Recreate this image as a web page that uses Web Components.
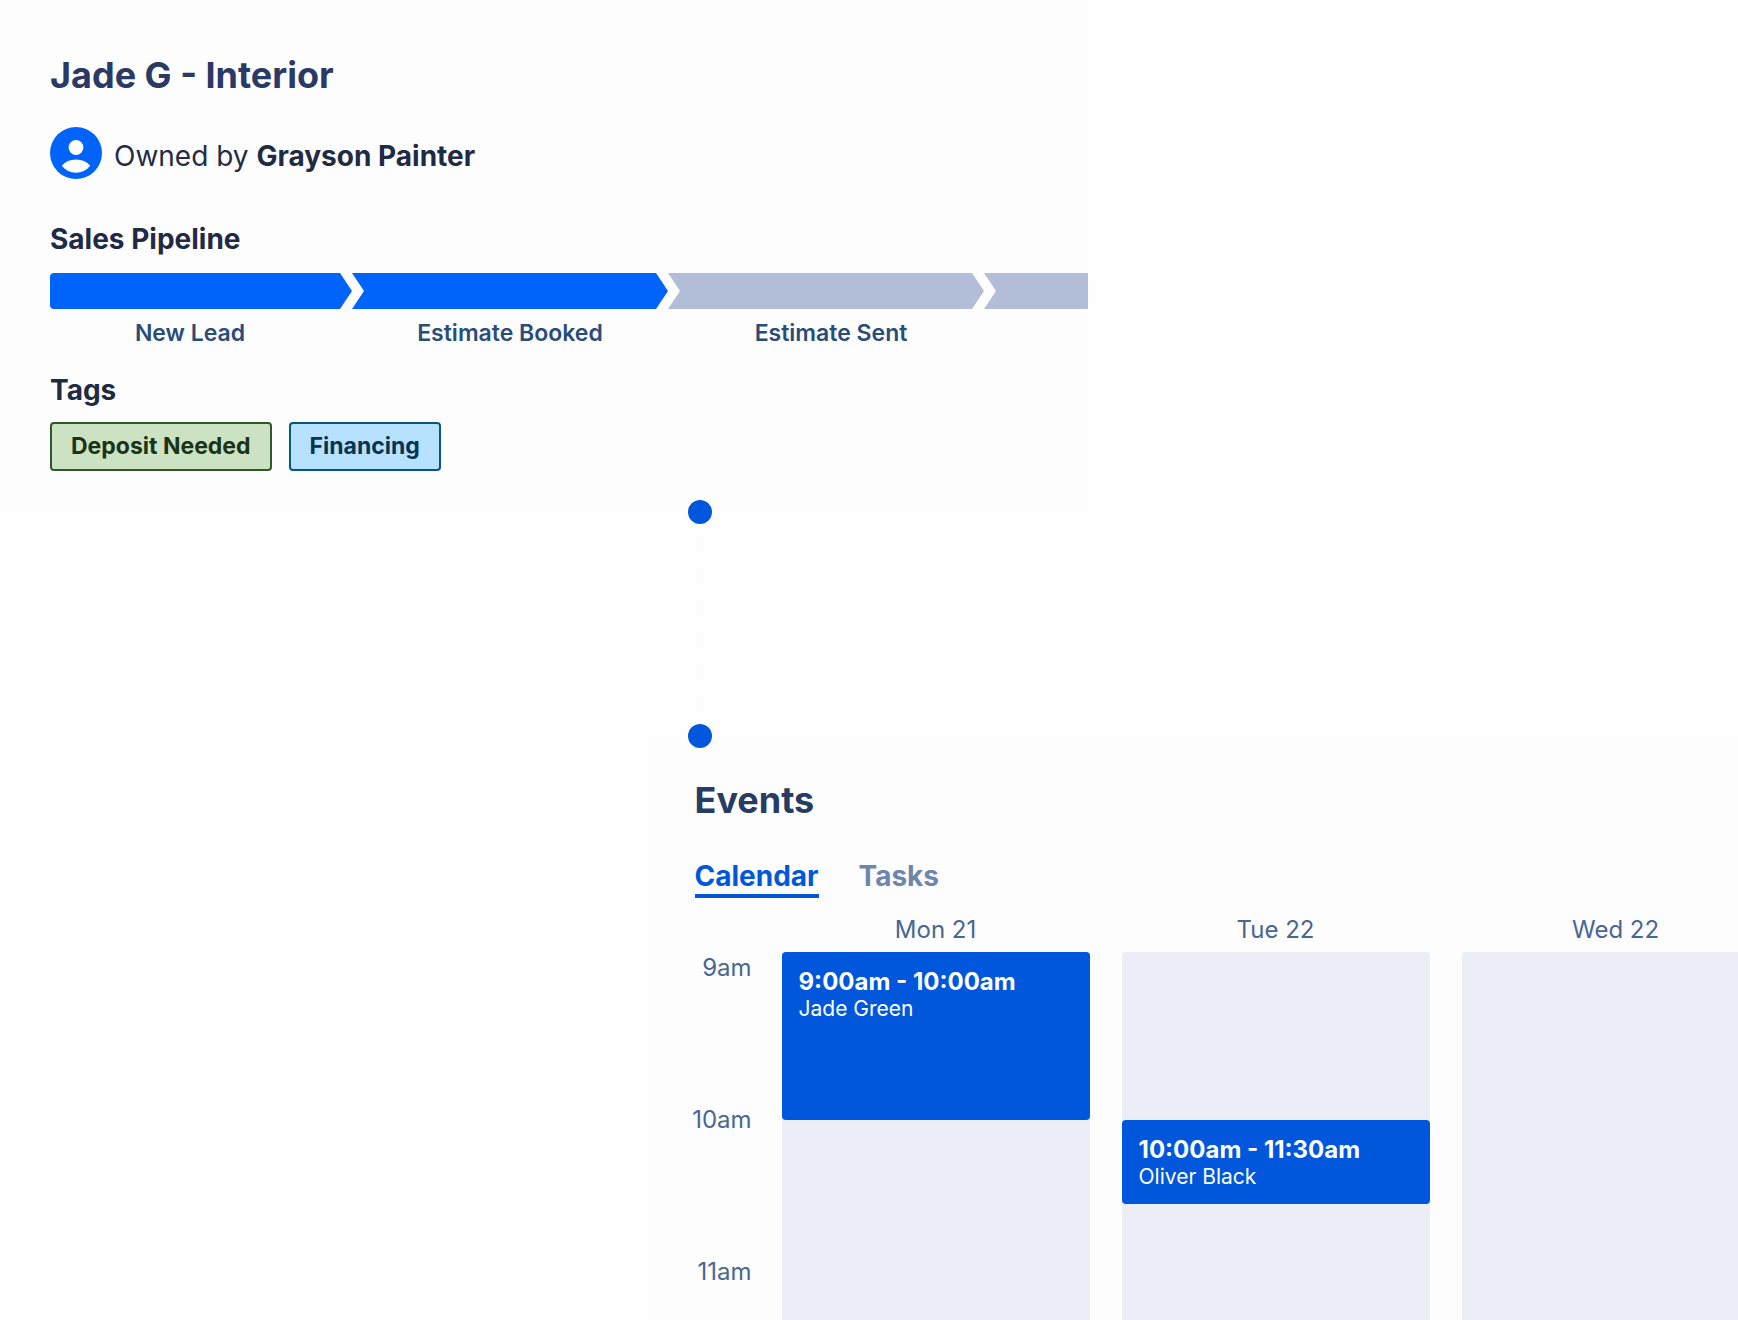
<!DOCTYPE html>
<html lang="en">
<head>
<meta charset="utf-8">
<meta name="viewport" content="width=device-width, initial-scale=1">
<title>Jade G - Interior</title>
<style>
  body { margin: 0; background: #fefefe; font-family: Inter, "Liberation Sans", sans-serif; }
</style>
</head>
<body>
<crm-page>
  <deal-card slot="deal" name="Jade G - Interior" owner="Grayson Painter">
    <pipeline-bar>
      <pipeline-stage first done>New Lead</pipeline-stage>
      <pipeline-stage done>Estimate Booked</pipeline-stage>
      <pipeline-stage>Estimate Sent</pipeline-stage>
      <pipeline-stage></pipeline-stage>
    </pipeline-bar>
    <tag-chip slot="tags" tone="green">Deposit Needed</tag-chip>
    <tag-chip slot="tags" tone="blue">Financing</tag-chip>
  </deal-card>
  <card-link slot="link"></card-link>
  <events-card slot="events">
    <hour-scale slot="hours" hours="9am,10am,11am"></hour-scale>
    <day-column day="Mon 21">
      <event-block time="9:00am - 10:00am" style="--height:168px">Jade Green</event-block>
    </day-column>
    <day-column day="Tue 22">
      <event-block time="10:00am - 11:30am" style="--start:168px;--height:84px">Oliver Black</event-block>
    </day-column>
    <day-column day="Wed 22"></day-column>
  </events-card>
</crm-page>

<script>
const define = (name, render, after) => customElements.define(name, class extends HTMLElement {
  connectedCallback() {
    if (this.shadowRoot) return;
    this.attachShadow({ mode: 'open' }).innerHTML =
      '<style>:host,*{box-sizing:border-box}:host([hidden]){display:none}</style>' + render(this);
    if (after) after(this);
  }
});

define('crm-page', () => `
  <style>
    :host { display: flex; flex-direction: column; height: 100vh; overflow: hidden; }
    .link { display: flex; margin: -12px 0; padding-left: calc(37.2% + 41px); z-index: 1; }
    .events { flex: 1; min-height: 0; display: flex; padding-left: 37.2%; }
    .deal { display: flex; width: 62.6%; }
    ::slotted(deal-card), ::slotted(events-card) { flex: 1; min-width: 0; }
  </style>
  <div class="deal"><slot name="deal"></slot></div>
  <div class="link"><slot name="link"></slot></div>
  <div class="events"><slot name="events"></slot></div>`);

define('deal-card', el => `
  <style>
    :host { display: block; background: #fdfdfd; padding: 51px 0 41px 50px; overflow: hidden; }
    h1 { margin: 0; font-size: 36px; line-height: 48px; font-weight: 700; color: #2b3a64; }
    .owner { display: flex; align-items: center; gap: 12px; margin-top: 28px; font-size: 28px; line-height: 34px; color: #242c45; }
    .owner p { margin: 6px 0 0; }
    b { font-weight: 700; color: #1f2a44; }
    svg { display: block; width: 52px; height: 52px; }
    h2 { margin: 0; font-size: 28px; line-height: 34px; font-weight: 700; color: #1f2a44; }
    .pipe { margin-top: 43px; }
    .tagh { margin-top: 26px; }
    .tags { display: flex; gap: 17px; margin-top: 15px; }
  </style>
  <h1>${el.getAttribute('name')}</h1>
  <div class="owner">
    <svg viewBox="0 0 52 52" aria-hidden="true"><circle cx="26" cy="26" r="26" fill="#0064fb"/><circle cx="26" cy="20.5" r="7.4" fill="#fff"/><path d="M11.8 38.8Q17 32.6 26 32.6T40.2 38.8Q34.500 45.800 26 45.800T11.800 38.800Z" fill="#fff"/></svg>
    <p>Owned by <b>${el.getAttribute('owner')}</b></p>
  </div>
  <h2 class="pipe">Sales Pipeline</h2>
  <slot></slot>
  <h2 class="tagh">Tags</h2>
  <div class="tags"><slot name="tags"></slot></div>`);

define('pipeline-bar', () => `
  <style>
    :host { display: flex; margin-top: 17px; overflow: hidden; }
  </style>
  <slot></slot>`);

define('pipeline-stage', () => `
  <style>
    :host { display: block; flex: 0 0 316px; --fill: #b2bed8; }
    :host([first]) { flex-basis: 302px; }
    :host([done]) { --fill: #0064fb; }
    .arrow { height: 36px; background: var(--fill);
      clip-path: polygon(0 0, calc(100% - 12px) 0, 100% 50%, calc(100% - 12px) 100%, 0 100%, 12px 50%); }
    :host([first]) .arrow { border-radius: 4px 0 0 4px;
      clip-path: polygon(0 0, calc(100% - 12px) 0, 100% 50%, calc(100% - 12px) 100%, 0 100%); }
    .label { height: 28px; margin-top: 10px; font-size: 23px; line-height: 28px; font-weight: 600; color: #2a4d78; text-align: center; }
    :host([first]) .label { padding-right: 22px; }
    :host(:not([done])) .label { padding-left: 10px; }
  </style>
  <div class="arrow"></div>
  <div class="label"><slot></slot></div>`);

define('tag-chip', () => `
  <style>
    :host { display: block; padding: 0 19px; border: 2px solid; border-radius: 4px; font-size: 23px; line-height: 45px; font-weight: 700; }
    :host([tone=green]) { background: #cbe3c3; border-color: #2f5a28; }
    :host([tone=blue]) { background: #b6e2ff; border-color: #04587f; }
    :host([tone=green]) span { color: #1b3316; }
    :host([tone=blue]) span { color: #083452; }
  </style>
  <span><slot></slot></span>`);

define('card-link', () => `
  <style>
    :host { display: flex; flex-direction: column; align-items: center; width: 24px; height: 248px; }
    i { width: 24px; height: 24px; border-radius: 50%; background: #0057dc; }
    .dash { flex: 1; width: 8px; margin: 12px 0; background: repeating-linear-gradient(#fcfbfd 0 16px, transparent 16px 32px); }
  </style>
  <i></i><div class="dash"></div><i></i>`);

define('events-card', () => `
  <style>
    :host { display: flex; flex-direction: column; background: #fdfdfd; padding: 40px 0 0 48px; overflow: hidden; }
    h1 { margin: 0; font-size: 36px; line-height: 48px; font-weight: 700; color: #263c62; }
    .tabs { display: flex; gap: 40px; margin-top: 35px; }
    button { font: 700 28px/34px Inter, "Liberation Sans", sans-serif; color: #6e86ab; background: none; border: 0;
      border-bottom: 4px solid transparent; padding: 0 0 1px; cursor: pointer; }
    button[aria-selected=true] { color: #0057dc; border-color: #0057dc; }
    .grid { flex: 1; min-height: 0; display: flex; gap: 32px; margin-top: 16px; }
  </style>
  <h1>Events</h1>
  <div class="tabs" role="tablist">
    <button type="button" role="tab" aria-selected="true">Calendar</button>
    <button type="button" role="tab" aria-selected="false">Tasks</button>
  </div>
  <div class="grid"><slot name="hours"></slot><slot></slot></div>`,
  el => {
    const tabs = [...el.shadowRoot.querySelectorAll('button')];
    tabs.forEach(t => t.addEventListener('click', () =>
      tabs.forEach(o => o.setAttribute('aria-selected', String(o === t)))));
  });

define('hour-scale', el => `
  <style>
    :host { display: block; flex: 0 0 61px; margin: 0 -2px 0 -4px; padding-top: 38px; }
    div { display: flex; justify-content: flex-end; height: 152px; padding-top: 1px; font-size: 24px; line-height: 30px; color: #486791; }
  </style>
  ${el.getAttribute('hours').split(',').map(h => `<div>${h}</div>`).join('')}`);

define('day-column', el => `
  <style>
    :host { display: flex; flex-direction: column; flex: 0 0 308px; }
    .day { padding: 1px 0 7px; font-size: 24px; line-height: 30px; color: #486791; text-align: center; }
    .track { flex: 1; background: #ebedf7; border-radius: 4px 4px 0 0; display: flow-root; }
  </style>
  <div class="day">${el.getAttribute('day')}</div>
  <div class="track"><slot></slot></div>`);

define('event-block', el => `
  <style>
    :host { display: block; margin-top: var(--start, 0); height: var(--height); padding: 16px 17px; border-radius: 4px; background: #0057dc; color: #fff; }
    .time { font-size: 24px; line-height: 28px; font-weight: 700; }
    .who { font-size: 21px; line-height: 26px; }
  </style>
  <div class="time">${el.getAttribute('time')}</div>
  <div class="who"><slot></slot></div>`);
</script>
</body>
</html>
